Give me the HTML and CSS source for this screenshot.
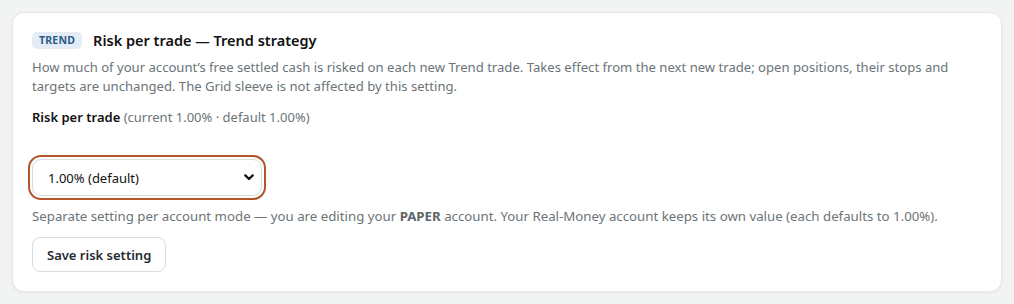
FILE: index.html
```html
<!DOCTYPE html>
<html lang="en">
<head>
    <meta charset="UTF-8">
    <meta name="viewport" content="width=device-width, initial-scale=1.0">
    <title>Risk per trade</title>
    <link rel="stylesheet" href="styles.css">
</head>
<body>
    <div class="card">
        <div class="card-head">
            <span class="badge">TREND</span>
            <h2 class="title">Risk per trade — Trend strategy</h2>
        </div>
        <p class="desc">How much of your account’s free settled cash is risked on each new Trend trade. Takes effect from the next new trade; open positions, their stops and targets are unchanged. The Grid sleeve is not affected by this setting.</p>

        <div class="field-label"><b>Risk per trade</b> (current 1.00% · default 1.00%)</div>

        <div class="select-wrap">
            <select class="select">
                <option>0.50%</option>
                <option>0.75%</option>
                <option selected>1.00% (default)</option>
                <option>1.50%</option>
                <option>2.00%</option>
            </select>
            <svg class="chevron" width="10" height="7" viewBox="0 0 10 7">
                <path d="M1.3 1.4 L5 5 L8.7 1.4" fill="none" stroke="#111" stroke-width="2.3" stroke-linecap="round" stroke-linejoin="round"/>
            </svg>
        </div>

        <p class="hint">Separate setting per account mode — you are editing your <b>PAPER</b> account. Your Real-Money account keeps its own value (each defaults to 1.00%).</p>

        <button class="btn">Save risk setting</button>
    </div>
</body>
</html>
```

FILE: styles.css
```css
body {
    margin: 0;
    padding: 12px;
    background: #f2f3f3;
    font-family: "Noto Sans", "Open Sans", sans-serif;
    color: #111827;
}

.card {
    width: 990px;
    box-sizing: border-box;
    background: #fff;
    border: 1px solid #e6e8e8;
    border-radius: 12px;
    box-shadow: 0 1px 3px rgba(0, 0, 0, 0.06);
    padding: 17px 19px 19px 19px;
}

.card-head {
    display: flex;
    align-items: center;
    gap: 11px;
}

.badge {
    display: inline-flex;
    align-items: center;
    height: 17px;
    background: #e4edf6;
    color: #2b5a8a;
    font-size: 10.5px;
    font-weight: 700;
    padding: 0 7px;
    border-radius: 5px;
    letter-spacing: 0.2px;
}

.title {
    margin: 0;
    font-size: 14.5px;
    font-weight: 600;
    color: #111;
}

.desc {
    margin: 8px 0 0;
    font-size: 13.1px;
    line-height: 19px;
    color: #6b7478;
}

.field-label {
    margin-top: 12px;
    font-size: 13px;
    line-height: 19px;
    color: #6b7478;
}

.field-label b {
    font-weight: 600;
    color: #111;
}

.select-wrap {
    position: relative;
    width: 230px;
    margin-top: 32px;
    border-radius: 9px;
    outline: 2.5px solid #b3552a;
    outline-offset: 2px;
}

.select {
    appearance: none;
    display: block;
    width: 100%;
    height: 37px;
    padding: 0 15px;
    font-family: inherit;
    font-size: 13px;
    color: #111;
    background: #fff;
    border: 1px solid #d8dddd;
    border-radius: 9px;
}

.chevron {
    position: absolute;
    right: 8px;
    top: 15px;
    pointer-events: none;
}

.hint {
    margin: 11px 0 0;
    font-size: 13.25px;
    line-height: 19px;
    color: #6b7478;
}

.hint b {
    font-weight: 700;
    color: #5d666a;
}

.btn {
    margin-top: 11px;
    height: 35px;
    padding: 0 14px;
    font-family: inherit;
    font-size: 13px;
    font-weight: 600;
    color: #1f2a33;
    background: #fff;
    border: 1px solid #d8dddd;
    border-radius: 8px;
}
```
